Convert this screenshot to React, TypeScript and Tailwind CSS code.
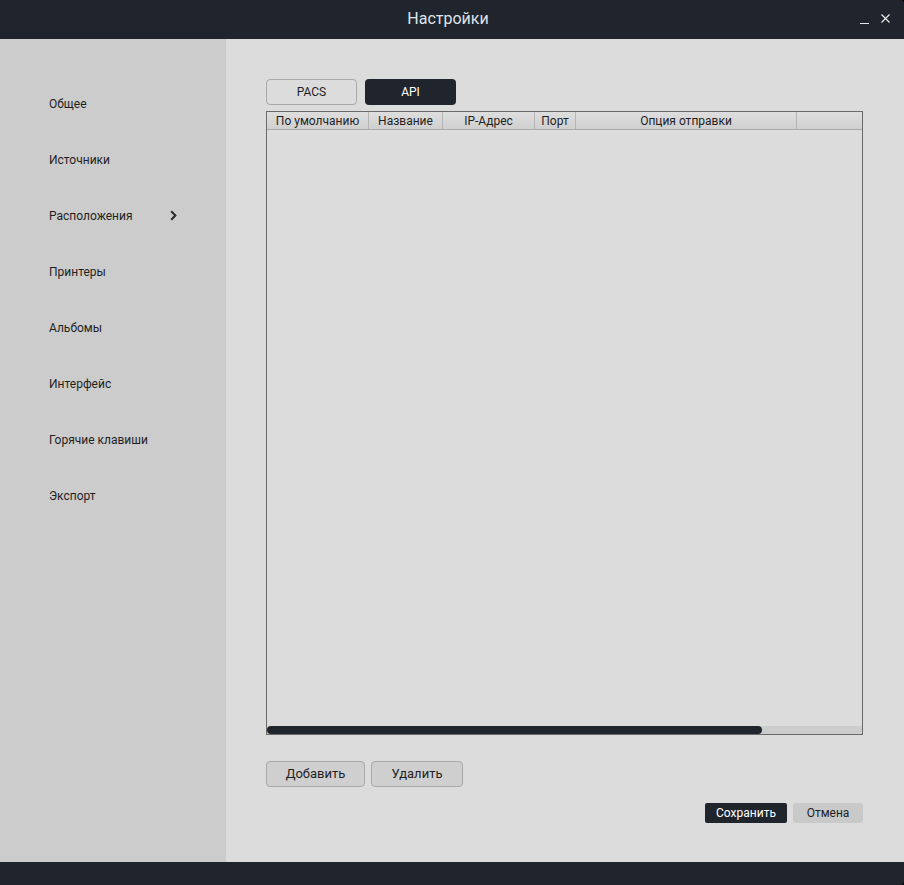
import React from "react";

const items = ["Общее", "Источники", "Расположения", "Принтеры", "Альбомы", "Интерфейс", "Горячие клавиши", "Экспорт"];
const cols: [string, number][] = [
  ["По умолчанию", 102],
  ["Название", 74],
  ["IP-Адрес", 92],
  ["Порт", 41],
  ["Опция отправки", 221],
];

export default function App() {
  return (
    <div className="w-[904px] h-[885px] bg-black overflow-hidden" style={{ fontFamily: "Roboto, 'Noto Sans', sans-serif" }}>
      <div className="w-[904px] h-[885px] flex flex-col rounded-tr-[4px] rounded-br-[4px] overflow-hidden bg-[#20252d]">
        <div className="h-[39px] shrink-0 flex items-center justify-center relative text-[#dfe3e8] text-[16px] pr-[8px]">
          <span className="mt-[-1px]">Настройки</span>
          <div className="absolute right-[14px] top-[9px] flex items-center gap-[12px] text-[#e6e6e6] text-[14px]">
            <span className="w-[9px] h-[1px] bg-[#e6e6e6] mt-[14px]" />
            <svg width="9" height="9" viewBox="0 0 9 9" className="mt-[3px]">
              <path d="M0.5 0.5L8.5 8.5M8.5 0.5L0.5 8.5" stroke="#e6e6e6" strokeWidth="1.2" />
            </svg>
          </div>
        </div>
        <div className="h-[823px] shrink-0 flex">
          <div className="w-[226px] shrink-0 bg-[#cccccc] pt-[37px] flex flex-col">
            {items.map((t) => (
              <div key={t} className="h-[56px] flex items-center pl-[49px] text-[12px] text-[#1f1f1f] relative">
                <span>{t}</span>
                {t === "Расположения" && (
                  <svg width="7" height="11" viewBox="0 0 7 11" className="absolute left-[170px] top-[22px]">
                    <path d="M1.2 1.2L5.4 5.5L1.2 9.8" stroke="#2a2a2a" strokeWidth="2" fill="none" />
                  </svg>
                )}
              </div>
            ))}
          </div>
          <div className="flex-1 bg-[#dcdcdc] pl-[40px] pr-[40px] pt-[40px] flex flex-col">
            <div className="flex gap-[8px] h-[26px]">
              <button className="w-[91px] h-[26px] rounded-[4px] border border-[#a9a9a9] bg-[#dcdcdc] text-[12px] text-[#1f1f1f]">PACS</button>
              <button className="w-[91px] h-[26px] rounded-[4px] bg-[#20252d] text-[12px] text-white">API</button>
            </div>
            <div className="mt-[6px] w-[597px] h-[624px] border border-[#6a6a6a] flex flex-col bg-[#dcdcdc]">
              <div className="h-[18px] flex border-b border-[#a8a8a8] bg-gradient-to-b from-[#dedede] to-[#d0d0d0] text-[12px] text-[#1f1f1f]">
                {cols.map(([c, w]) => (
                  <div key={c} className="h-full flex items-center justify-center border-r border-[#b4b4b4] leading-none" style={{ width: w }}>
                    {c}
                  </div>
                ))}
                <div className="flex-1" />
              </div>
              <div className="flex-1" />
              <div className="h-[8px] bg-[#cccccc] relative">
                <div className="absolute left-0 top-0 h-[8px] w-[495px] rounded-[4px] bg-[#20252d]" />
              </div>
            </div>
            <div className="mt-[26px] flex gap-[6px]">
              <button className="w-[99px] h-[26px] rounded-[4px] border border-[#a9a9a9] bg-[#cfcfcf] text-[13px] text-[#1f1f1f]">Добавить</button>
              <button className="w-[92px] h-[26px] rounded-[4px] border border-[#a9a9a9] bg-[#cfcfcf] text-[13px] text-[#1f1f1f]">Удалить</button>
            </div>
            <div className="mt-[16px] flex justify-end gap-[6px] w-[597px]">
              <button className="w-[82px] h-[20px] rounded-[2px] bg-[#20252d] text-[12px] text-white">Сохранить</button>
              <button className="w-[70px] h-[20px] rounded-[2px] bg-[#c9c9c9] text-[12px] text-[#1f1f1f]">Отмена</button>
            </div>
          </div>
        </div>
        <div className="flex-1" />
      </div>
    </div>
  );
}
